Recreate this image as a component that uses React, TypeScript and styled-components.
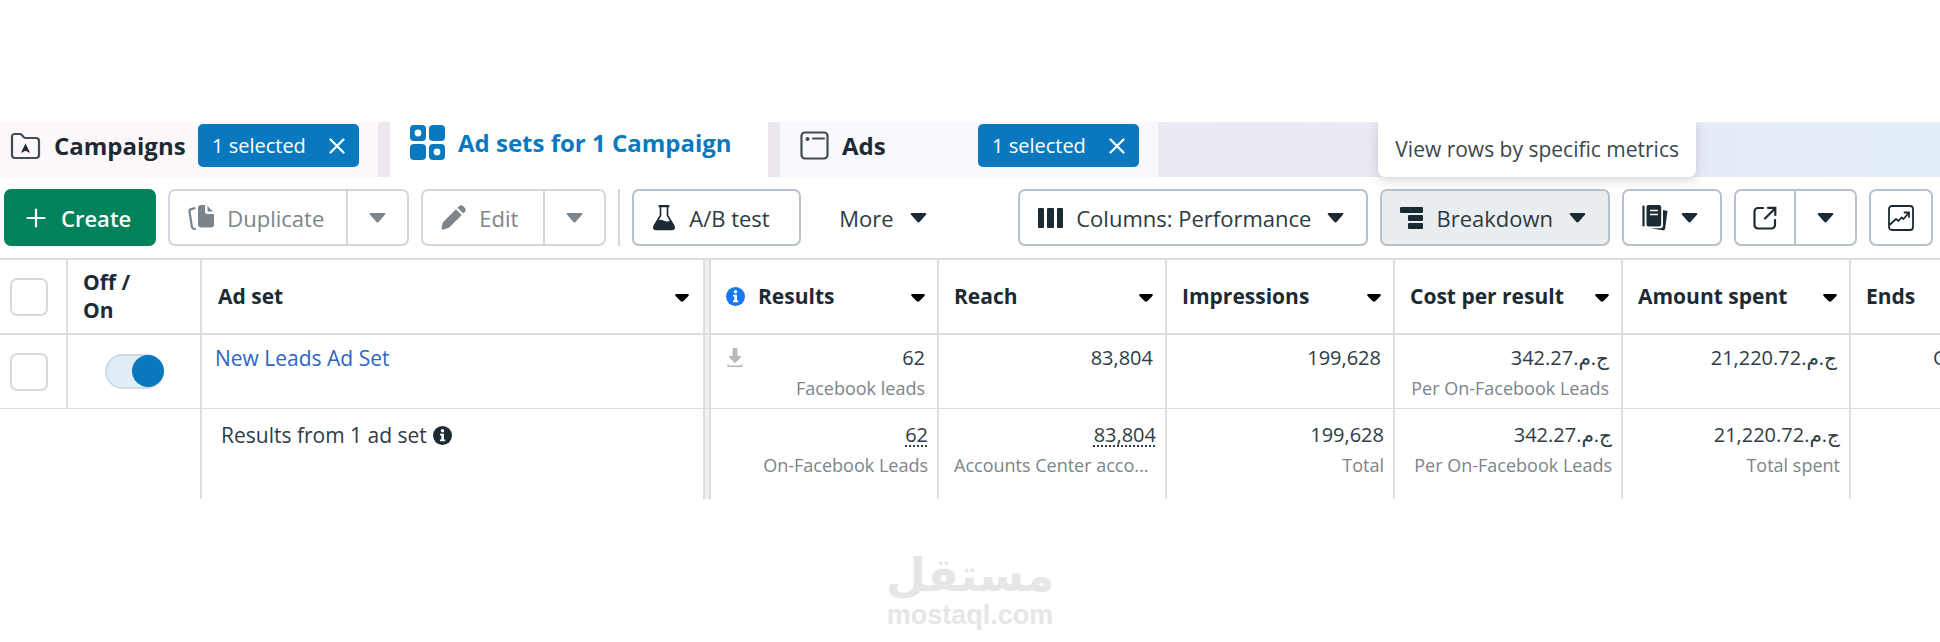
import React from 'react';
import styled, { createGlobalStyle, css } from 'styled-components';

const ink = '#1c2b33';
const muted = '#7b858b';
const blue = '#0a78be';
const rule = '#dcdde0';

const GlobalStyle = createGlobalStyle`
  *, *::before, *::after { box-sizing: border-box; }
  body {
    margin: 0;
    background: #fff;
    color: ${ink};
    font-family: 'Open Sans', 'Noto Sans', 'DejaVu Sans', sans-serif;
    overflow-x: hidden;
  }
  button, input { font: inherit; color: inherit; margin: 0; }
`;

const Page = styled.div`
  padding-top: 122px;
`;

/* ---------- Tabs ---------- */

const TabStrip = styled.nav`
  position: relative;
  display: flex;
  gap: 12px;
  height: 55px;
  background: linear-gradient(90deg, #eee8ee 0, #ece7ef 800px, #ebe9f3 1200px, #e6ecf7 1700px, #e3eef9 100%);
`;

const Tab = styled.div<{ $tone: string; $active?: boolean; $inset?: boolean }>`
  flex: 0 1 378px;
  display: flex;
  align-items: center;
  padding: ${p => (p.$active ? '0 20px 14px' : '0 19px 8px 10px')};
  background: ${p => p.$tone};
  ${p => p.$inset && css`padding-left: 20px;`}
`;

const TabLink = styled.a<{ $active?: boolean }>`
  display: flex;
  align-items: center;
  gap: 13px;
  color: ${p => (p.$active ? blue : ink)};
  font-size: 24px;
  font-weight: 700;
  line-height: 32px;
  white-space: nowrap;
  text-decoration: none;
`;

const Badge = styled.button`
  display: flex;
  align-items: center;
  justify-content: space-between;
  width: 161px;
  height: 43px;
  margin-left: auto;
  padding: 0 14px;
  border: 0;
  border-radius: 5px;
  background: ${blue};
  color: #fff;
  font-size: 20px;
  font-weight: 500;
  white-space: nowrap;
`;

const Tooltip = styled.div`
  position: absolute;
  top: 0;
  right: 244px;
  height: 55px;
  padding: 11px 17px;
  border-radius: 0 0 7px 7px;
  background: #fff;
  box-shadow: 0 3px 12px rgba(60, 50, 40, 0.2);
  clip-path: inset(0 -20px -20px -20px);
  font-size: 21px;
  line-height: 32px;
  color: #3a474f;
  white-space: nowrap;
`;

/* ---------- Toolbar ---------- */

const Toolbar = styled.div`
  display: flex;
  align-items: center;
  gap: 12px;
  padding: 12px 7px 12px 4px;
`;

const Group = styled.div`
  display: flex;
  gap: 12px;
  margin-left: auto;
`;

type Look = 'outline' | 'disabled' | 'primary' | 'pressed' | 'plain';

const looks = {
  outline: css`background: #fff; border-color: #b9c1ca; color: #2c3a42;`,
  disabled: css`background: #fff; border-color: #d3d8de; color: ${muted};`,
  primary: css`background: #02825a; border-color: #02825a; color: #fff; font-weight: 600;`,
  pressed: css`background: #ebeef1; border-color: #b9c1ca; color: #2c3a42;`,
  plain: css`background: none; border-color: transparent; color: #2c3a42; margin-left: 6px;`,
};

const ToolButton = styled.button<{ $look?: Look; $min?: number }>`
  display: flex;
  align-items: center;
  gap: 13px;
  height: 57px;
  min-width: ${p => p.$min ?? 0}px;
  padding: 0 22px 0 18px;
  border: 2px solid;
  border-radius: 7px;
  font-size: 22px;
  font-weight: 500;
  white-space: nowrap;
  ${p => looks[p.$look ?? 'outline']}
`;

const CreateButton = styled(ToolButton)`
  gap: 15px;
  padding: 0 23px 0 20px;
`;

const MenuButton = styled(ToolButton)`
  & > svg:last-child { margin-left: 3px; }
`;

const IconButton = styled(ToolButton)`
  padding: 0 17px;
`;

const Split = styled.div`
  display: flex;
  & > button:first-child { border-radius: 7px 0 0 7px; border-right-width: 0; }
  & > button:last-child { border-radius: 0 7px 7px 0; padding: 0 21px; }
`;

const Divider = styled.span`
  width: 2px;
  height: 57px;
  background: #d3d8de;
`;

/* ---------- Table ---------- */

const TableFrame = styled.div`
  overflow: hidden;
`;

const Table = styled.table`
  width: calc(100% + 86px);
  table-layout: fixed;
  border-collapse: separate;
  border-spacing: 0;
`;

const Col = styled.col<{ $w?: number }>`
  width: ${p => (p.$w ? `${p.$w}px` : 'auto')};
`;

const frozenEdge = css`
  border-right: 0;
  background: linear-gradient(90deg, ${rule} 2px, #f1f1f2 2px 6px, ${rule} 6px) right / 8px 100% no-repeat;
`;

const HeadCell = styled.th<{ $frozen?: boolean }>`
  height: 77px;
  padding: 0 12px 1px 15px;
  border: solid ${rule};
  border-width: 2px 2px 2px 0;
  font-size: 21px;
  font-weight: 700;
  line-height: 28px;
  text-align: left;
  white-space: nowrap;
  ${p => p.$frozen && css`${frozenEdge} padding-left: 16px; padding-right: 22px;`}
`;

const HeadContent = styled.div`
  display: flex;
  align-items: center;
  gap: 13px;
  & > svg:last-child { margin-left: auto; }
`;

const WrapLabel = styled.span`
  display: block;
  white-space: normal;
  width: 56px;
`;

const Cell = styled.td<{ $total?: boolean; $frozen?: boolean; $start?: boolean; $middle?: boolean }>`
  height: ${p => (p.$total ? 90 : 74)}px;
  padding: ${p => (p.$total ? '12px 9px 0 15px' : '9px 12px 0 13px')};
  border: solid ${rule};
  border-width: ${p => (p.$total ? '0 2px 0 0' : '0 2px 1px 0')};
  vertical-align: top;
  text-align: ${p => (p.$start ? 'left' : 'right')};
  font-size: ${p => (p.$start ? 21 : 20)}px;
  line-height: 28px;
  color: #2f3c44;
  white-space: nowrap;
  ${p => p.$frozen && frozenEdge}
  ${p => p.$total && p.$start && css`padding-left: 19px;`}
  ${p => p.$middle && css`padding: 0; vertical-align: middle; line-height: 0;`}
`;

const CheckHead = styled(HeadCell)`
  padding: 0 0 0 10px;
  line-height: 0;
`;

const CheckCell = styled(Cell)`
  padding: 0 0 0 10px;
  vertical-align: middle;
  text-align: left;
  line-height: 0;
`;

const CheckBox = styled.input`
  appearance: none;
  width: 38px;
  height: 38px;
  border: 2px solid #d6dadf;
  border-radius: 7px;
  background: #fff;
`;

const Switch = styled.input`
  appearance: none;
  display: inline-flex;
  justify-content: flex-end;
  width: 59px;
  height: 35px;
  margin-right: 36px;
  border: 2px solid #cfd9e2;
  border-radius: 18px;
  background: #e1edf7;
  &::before {
    content: '';
    width: 32px;
    height: 32px;
    margin: -1px -2px 0 0;
    border-radius: 50%;
    background: ${blue};
  }
`;

const AdSetLink = styled.a`
  color: #2d66c4;
  text-decoration: none;
`;

const Value = styled.div<{ $dotted?: boolean }>`
  display: flex;
  align-items: center;
  justify-content: flex-end;
  & > svg { margin-right: auto; }
  & > span { ${p => p.$dotted && css`text-decoration: underline dotted 2px; text-underline-offset: 3px; text-decoration-skip-ink: none;`} }
`;

const Note = styled.div<{ $left?: boolean }>`
  font-size: 18px;
  line-height: 32px;
  color: ${muted};
  text-align: ${p => (p.$left ? 'left' : 'right')};
`;

const Summary = styled.span`
  display: flex;
  align-items: center;
  gap: 6px;
`;

/* ---------- Footer mark ---------- */

const Watermark = styled.footer`
  display: flex;
  flex-direction: column;
  align-items: center;
  padding-top: 52px;
  color: #e6e6e6;
  font-weight: 700;
`;

const MarkArabic = styled.span`
  font-family: 'DejaVu Sans', sans-serif;
  font-size: 46px;
  line-height: 48px;
`;

const MarkLatin = styled.span`
  font-family: 'Liberation Sans', sans-serif;
  font-size: 27px;
  line-height: 32px;
`;

/* ---------- Icons ---------- */

const Caret = ({ color = 'currentColor' }: { color?: string }) => (
  <svg width="17" height="12" viewBox="0 0 17 12" aria-hidden="true">
    <path d="M1.6 1h13.8c.9 0 1.2.9.7 1.5l-6.300 7.300c-.7.8-1.900.8-2.600 0L.9 2.500C.4 1.900.700 1 1.600 1z" fill={color} />
  </svg>
);

const HeadCaret = () => (
  <svg width="14" height="28" viewBox="0 0 14 28" aria-hidden="true">
    <path d="M1.200 12h11.600c.9 0 1.300 1.200.6 1.900l-4.900 5c-.8.8-2.200.8-3 0l-4.900-5C-.1 13.200.3 12 1.200 12z" fill="#000" />
  </svg>
);

const Close = () => (
  <svg width="16" height="16" viewBox="0 0 16 16" fill="none" stroke="currentColor" strokeWidth="2.200" strokeLinecap="round" aria-hidden="true">
    <path d="M1.500 1.500l13 13M14.500 1.500l-13 13" />
  </svg>
);

const FolderIcon = () => (
  <svg width="31" height="28" viewBox="0 0 31 28" aria-hidden="true">
    <path d="M2 23V4.500A2.500 2.500 0 0 1 4.500 2h5.200c.8 0 1.500.3 2 .9l2.100 2.400c.4.400.9.700 1.500.700H26a3 3 0 0 1 3 3v14a3 3 0 0 1-3 3H5a3 3 0 0 1-3-3z" fill="none" stroke="#414c54" strokeWidth="2.200" />
    <path d="M15.500 11.500l4.600 9.500-4.600-2.200-4.600 2.200z" fill={ink} />
  </svg>
);

const GridIcon = () => (
  <svg width="35" height="35" viewBox="0 0 35 35" fill={blue} aria-hidden="true">
    <rect width="16" height="16" rx="4" />
    <rect x="19" width="16" height="16" rx="4" />
    <rect y="19" width="16" height="16" rx="4" />
    <rect x="19" y="19" width="16" height="16" rx="4" />
    <circle cx="8" cy="8" r="3.400" fill="#fff" />
    <circle cx="27" cy="27" r="3.400" fill="#fff" />
  </svg>
);

const WindowIcon = () => (
  <svg width="29" height="29" viewBox="0 0 29 29" fill="none" stroke="#414c54" aria-hidden="true">
    <rect x="1.500" y="1.500" width="26" height="26" rx="3.500" strokeWidth="2.200" />
    <circle cx="7.500" cy="8" r="2" fill="#414c54" stroke="none" />
    <path d="M13 7.500h11" strokeWidth="2.200" strokeLinecap="round" />
  </svg>
);

const PlusIcon = () => (
  <svg width="20" height="20" viewBox="0 0 20 20" stroke="currentColor" strokeWidth="2.200" strokeLinecap="round" aria-hidden="true">
    <path d="M10 1.500v17M1.500 10h17" />
  </svg>
);

const DuplicateIcon = () => (
  <svg width="26" height="26" viewBox="0 0 26 26" fill={muted} aria-hidden="true">
    <path d="M6.500 3.200l-2.700.7c-1.600.4-2.500 1.500-2.200 3.200l2.200 14.200c.3 1.700 1.300 2.600 3.200 2.700" fill="none" stroke={muted} strokeWidth="2.200" strokeLinecap="round" />
    <path d="M13 0h4v6.500A2.500 2.500 0 0 0 19.500 9H26v10.500a3 3 0 0 1-3 3H13a3 3 0 0 1-3-3V3a3 3 0 0 1 3-3z" />
    <path d="M19.500 1l5.600 5.600h-4.600a1 1 0 0 1-1-1z" />
  </svg>
);

const PencilIcon = () => (
  <svg width="25" height="25" viewBox="0 0 25 25" fill={muted} aria-hidden="true">
    <path d="M15 4.200l5.800 5.800L8.500 22.300c-.5.5-1 .8-1.700 1L2 24.500c-.9.2-1.700-.6-1.500-1.500l1.200-4.800c.2-.7.500-1.200 1-1.700z" />
    <path d="M16.500 2.700l1.300-1.300c1.400-1.400 3.200-1.400 4.500-.1l1.400 1.400c1.300 1.300 1.300 3.100-.1 4.500l-1.300 1.300z" />
  </svg>
);

const FlaskIcon = () => (
  <svg width="24" height="26" viewBox="0 0 24 26" aria-hidden="true">
    <path d="M8.500 2v8.500L2.200 21c-1 1.900-.2 3.500 2 3.500h15.600c2.200 0 3-1.600 2-3.500L15.500 10.500V2" fill="none" stroke={ink} strokeWidth="1.600" />
    <path d="M7.500 1.200h9" stroke={ink} strokeWidth="2.200" strokeLinecap="round" />
    <path d="M5.500 15.500c2.500-1.300 4.500-.8 6.500.3 2.400 1.200 4.500.8 6.500-.3l4 6.500c.7 1.700-.4 2.900-2.500 2.900H4c-2.100 0-3.200-1.200-2.500-2.900z" fill={ink} />
  </svg>
);

const ColumnsIcon = () => (
  <svg width="25" height="20" viewBox="0 0 25 20" fill={ink} aria-hidden="true">
    <rect width="6" height="20" rx="1" />
    <rect x="9" width="7" height="20" rx="1" />
    <rect x="19" width="6" height="20" rx="1" />
  </svg>
);

const BreakdownIcon = () => (
  <svg width="23" height="24" viewBox="0 0 23 24" fill={ink} aria-hidden="true">
    <rect y="1" width="23" height="6" rx="1" />
    <rect x="8" y="9" width="15" height="6" rx="1" />
    <rect x="8" y="17" width="15" height="6" rx="1" />
  </svg>
);

const ReportsIcon = () => (
  <svg width="26" height="26" viewBox="0 0 26 26" aria-hidden="true">
    <path d="M1.500 1.500v19" stroke={ink} strokeWidth="2.200" strokeLinecap="round" />
    <path d="M6.500 0H17a2.200 2.200 0 0 1 2.200 2.200v17A2.200 2.200 0 0 1 17 21.500H6.500a2 2 0 0 1-2-2V2a2 2 0 0 1 2-2z" fill={ink} />
    <path d="M8 5.500h8M8 9.500h8" stroke="#fff" strokeWidth="1.600" />
    <path d="M21 5l4.500 1-2.300 17.200c-.2 1.500-1.200 2.200-2.600 2L8.500 23.200H18c2 0 3-1 3-3z" fill={ink} />
  </svg>
);

const ExportIcon = () => (
  <svg width="24" height="24" viewBox="0 0 24 24" fill="none" stroke={ink} strokeWidth="2.200" strokeLinecap="round" aria-hidden="true">
    <path d="M10 2H5a3.500 3.500 0 0 0-3.500 3.500V19A3.500 3.500 0 0 0 5 22.500h13.500A3.500 3.500 0 0 0 22 19v-5" />
    <path d="M12 12.500L21.500 3M15 1.800h7.300V9" />
  </svg>
);

const ChartIcon = () => (
  <svg width="26" height="26" viewBox="0 0 26 26" fill="none" stroke={ink} strokeLinecap="round" strokeLinejoin="round" aria-hidden="true">
    <rect x="1" y="1" width="24" height="24" rx="3" strokeWidth="1.800" />
    <path d="M2 19.500l6-5.500 2.500 2 3-3.500 2 1.500 5-6" strokeWidth="1.800" />
    <path d="M16.500 7.500h4.500V12" strokeWidth="1.800" />
  </svg>
);

const InfoIcon = ({ color }: { color: string }) => (
  <svg width="19" height="19" viewBox="0 0 19 19" aria-hidden="true">
    <circle cx="9.500" cy="9.500" r="9.500" fill={color} />
    <circle cx="9.500" cy="4.700" r="1.700" fill="#fff" />
    <path d="M7 7.800h4v5.700h1.200v1.700H7v-1.700h1.300V9.500H7z" fill="#fff" />
  </svg>
);

const DownloadIcon = () => (
  <svg width="20" height="20" viewBox="0 0 20 20" fill="#b5b8bb" aria-hidden="true">
    <path d="M8.500 1.500C8.500.7 9.100 0 10 0h2c.9 0 1.500.7 1.500 1.500V8h2.700c.8 0 1.100.8.6 1.300l-5 5.300c-.4.500-1.200.5-1.600 0l-5-5.300C4.700 8.800 5 8 5.800 8h2.700z" />
    <path d="M3.500 16h1v1.500h13V16h1v3h-15z" />
  </svg>
);

/* ---------- Data ---------- */

type Metric = {
  name: string;
  info?: boolean;
  value: string;
  note?: string;
  download?: boolean;
  total: string;
  totalNote: string;
  dotted?: boolean;
  rtl?: boolean;
  clipped?: boolean;
};

const metrics: Metric[] = [
  { name: 'Results', info: true, value: '62', note: 'Facebook leads', download: true, total: '62', totalNote: 'On-Facebook Leads', dotted: true },
  { name: 'Reach', value: '83,804', total: '83,804', totalNote: 'Accounts Center acco...', dotted: true, clipped: true },
  { name: 'Impressions', value: '199,628', total: '199,628', totalNote: 'Total' },
  { name: 'Cost per result', value: 'ج.م.342.27', note: 'Per On-Facebook Leads', total: 'ج.م.342.27', totalNote: 'Per On-Facebook Leads', rtl: true },
  { name: 'Amount spent', value: 'ج.م.21,220.72', total: 'ج.م.21,220.72', totalNote: 'Total spent', rtl: true },
];

const SelectedBadge = () => (
  <Badge type="button" aria-label="1 selected, clear">
    1 selected
    <Close />
  </Badge>
);

export default function App() {
  return (
    <>
      <GlobalStyle />
      <Page>
        <TabStrip>
          <Tab $tone="#fcf8fa">
            <TabLink href="#campaigns"><FolderIcon />Campaigns</TabLink>
            <SelectedBadge />
          </Tab>
          <Tab $tone="#fff" $active>
            <TabLink href="#adsets" $active><GridIcon />Ad sets for 1 Campaign</TabLink>
          </Tab>
          <Tab $tone="#f9f8fc" $inset>
            <TabLink href="#ads"><WindowIcon />Ads</TabLink>
            <SelectedBadge />
          </Tab>
          <Tooltip role="tooltip">View rows by specific metrics</Tooltip>
        </TabStrip>

        <Toolbar>
          <CreateButton type="button" $look="primary"><PlusIcon />Create</CreateButton>
          <Split>
            <ToolButton type="button" $look="disabled"><DuplicateIcon />Duplicate</ToolButton>
            <ToolButton type="button" $look="disabled" $min={62} aria-label="Duplicate options"><Caret /></ToolButton>
          </Split>
          <Split>
            <ToolButton type="button" $look="disabled" $min={122}><PencilIcon />Edit</ToolButton>
            <ToolButton type="button" $look="disabled" $min={62} aria-label="Edit options"><Caret /></ToolButton>
          </Split>
          <Divider />
          <ToolButton type="button" $min={169}><FlaskIcon />A/B test</ToolButton>
          <MenuButton type="button" $look="plain">More<Caret color={ink} /></MenuButton>
          <Group>
            <MenuButton type="button"><ColumnsIcon />Columns: Performance<Caret color={ink} /></MenuButton>
            <MenuButton type="button" $look="pressed"><BreakdownIcon />Breakdown<Caret color={ink} /></MenuButton>
            <ToolButton type="button" aria-label="Reports"><ReportsIcon /><Caret color={ink} /></ToolButton>
            <Split>
              <IconButton type="button" aria-label="Export"><ExportIcon /></IconButton>
              <ToolButton type="button" $min={62} aria-label="Export options"><Caret color={ink} /></ToolButton>
            </Split>
            <IconButton type="button" aria-label="Charts"><ChartIcon /></IconButton>
          </Group>
        </Toolbar>

        <TableFrame>
          <Table>
            <colgroup>
              <Col $w={68} />
              <Col $w={134} />
              <Col />
              {metrics.map(m => <Col key={m.name} $w={228} />)}
              <Col $w={175} />
            </colgroup>
            <thead>
              <tr>
                <CheckHead><CheckBox type="checkbox" aria-label="Select all ad sets" /></CheckHead>
                <HeadCell><WrapLabel>Off / On</WrapLabel></HeadCell>
                <HeadCell $frozen><HeadContent>Ad set<HeadCaret /></HeadContent></HeadCell>
                {metrics.map(m => (
                  <HeadCell key={m.name}>
                    <HeadContent>{m.info && <InfoIcon color="#1877f2" />}{m.name}<HeadCaret /></HeadContent>
                  </HeadCell>
                ))}
                <HeadCell>Ends</HeadCell>
              </tr>
            </thead>
            <tbody>
              <tr>
                <CheckCell><CheckBox type="checkbox" aria-label="Select New Leads Ad Set" /></CheckCell>
                <Cell $middle><Switch type="checkbox" role="switch" defaultChecked aria-label="Ad set on" /></Cell>
                <Cell $start $frozen><AdSetLink href="#adset">New Leads Ad Set</AdSetLink></Cell>
                {metrics.map(m => (
                  <Cell key={m.name}>
                    <Value>{m.download && <DownloadIcon />}<span dir={m.rtl ? 'rtl' : undefined}>{m.value}</span></Value>
                    {m.note && <Note>{m.note}</Note>}
                  </Cell>
                ))}
                <Cell>Ongoing</Cell>
              </tr>
              <tr>
                <Cell $total colSpan={2} />
                <Cell $total $start $frozen><Summary>Results from 1 ad set<InfoIcon color={ink} /></Summary></Cell>
                {metrics.map(m => (
                  <Cell $total key={m.name}>
                    <Value $dotted={m.dotted}><span dir={m.rtl ? 'rtl' : undefined}>{m.total}</span></Value>
                    <Note $left={m.clipped}>{m.totalNote}</Note>
                  </Cell>
                ))}
                <Cell $total />
              </tr>
            </tbody>
          </Table>
        </TableFrame>

        <Watermark>
          <MarkArabic lang="ar" dir="rtl">مستقل</MarkArabic>
          <MarkLatin>mostaql.com</MarkLatin>
        </Watermark>
      </Page>
    </>
  );
}
